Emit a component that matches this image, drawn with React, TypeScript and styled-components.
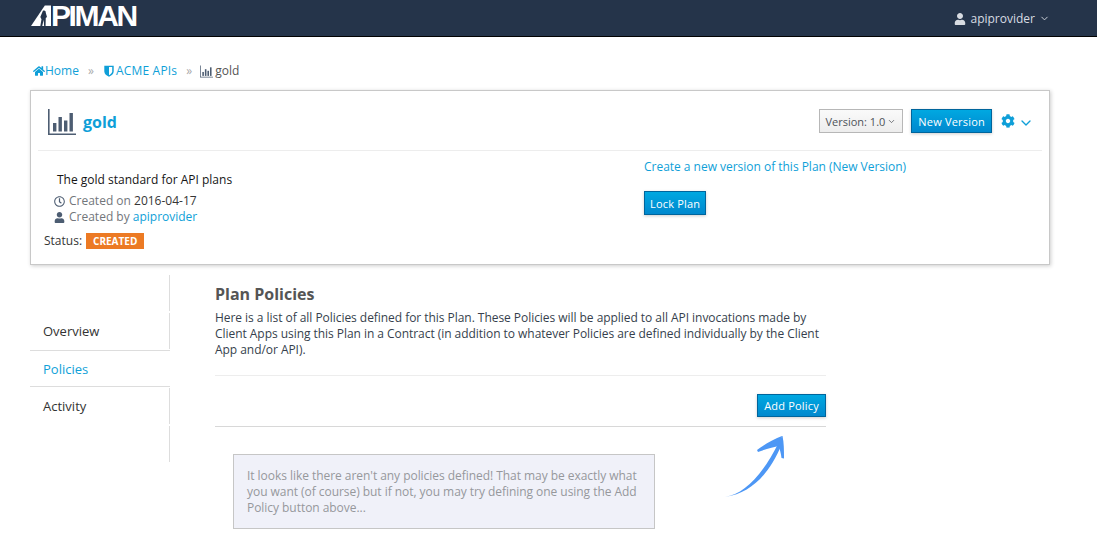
import React from 'react';
import styled, { createGlobalStyle } from 'styled-components';
import { FaHome, FaUser, FaCog, FaRegClock } from 'react-icons/fa';
import { FiChevronDown } from 'react-icons/fi';

const GlobalStyle = createGlobalStyle`
  html, body {
    margin: 0;
    padding: 0;
    background: #fff;
    font-family: "Open Sans", "Liberation Sans", sans-serif;
    font-size: 12px;
    line-height: 16px;
    color: #363636;
  }
  * { box-sizing: border-box; }
`;

function ChartIcon({ size }: { size: number }) {
  return (
    <svg width={size} height={size} viewBox="0 0 28 28" fill="#4d5d72">
      <path d="M0 1h1.600v24.400H28V27H0z" />
      <rect x="5" y="15" width="3.400" height="8.500" />
      <rect x="10.500" y="9" width="3.400" height="14.500" />
      <rect x="16" y="12.500" width="3.400" height="11" />
      <rect x="21.500" y="5" width="3.400" height="18.500" />
    </svg>
  );
}

function ShieldIcon() {
  return (
    <svg width="12" height="12" viewBox="-2 0 12 12">
      <path d="M0.300 0.800h9.400v5.600c0 2.500-2.400 4.200-4.700 5.300-2.300-1.100-4.700-2.800-4.700-5.300z" fill="#0f9fd8" />
      <path d="M5 2v8.200c1.500-.8 3.200-2.100 3.200-3.900V2z" fill="#fff" />
    </svg>
  );
}

function LogoMark() {
  return (
    <svg width="20" height="22" viewBox="0 0 21 22">
      <path d="M0 21.500 14.500 0H21v21.500z" fill="#fff" />
      <path d="M12.500 5.500c1.800-.9 3.300.3 3 2l1.300 4.500-1.300 1-.2 8.500h-1.500l-.5-6.500-1.500 6.500h-2l1.200-7-1.200-2.500z" fill="#25344a" />
    </svg>
  );
}

function PolicyArrow() {
  return (
    <ArrowSvg width="62" height="62" viewBox="0 0 62 62" fill="#4d97f5">
      <path d="M1 61C20 58 38 40 55 6L58 8C45 38 28 57 1 61Z" />
      <path d="M58 0C50 3 41 8 33 14L34 16C42 13 50 11 55 10Z" />
      <path d="M58 0L54 8C56 13 57 18 57.500 22L60 22.500C60 14 60 7 58.500 0Z" />
    </ArrowSvg>
  );
}

export default function App() {
  return (
    <>
      <GlobalStyle />
      <TopBar>
        <Logo>
          <LogoMark />
          <LogoText>PIMAN</LogoText>
        </Logo>
        <UserMenu>
          <FaUser size={12} />
          <span>apiprovider</span>
          <FiChevronDown size={11} />
        </UserMenu>
      </TopBar>

      <Page>
        <Breadcrumbs>
          <Crumb><FaHome size={12} />Home</Crumb>
          <Separator>»</Separator>
          <Crumb $gap={2} $tracking={0.2}><ShieldIcon />ACME APIs</Crumb>
          <Separator>»</Separator>
          <CurrentCrumb><ChartIcon size={13} />gold</CurrentCrumb>
        </Breadcrumbs>

        <Card>
          <CardHeader>
            <TitleBlock>
              <ChartIcon size={28} />
              <Title>gold</Title>
            </TitleBlock>
            <HeaderActions>
              <VersionButton>
                Version: 1.0
                <FiChevronDown size={9} />
              </VersionButton>
              <PrimaryButton>New Version</PrimaryButton>
              <GearMenu>
                <FaCog size={14} />
                <FiChevronDown size={16} />
              </GearMenu>
            </HeaderActions>
          </CardHeader>
          <CardBody>
            <Details>
              <Description>The gold standard for API plans</Description>
              <Meta>
                <MetaIcon><FaRegClock size={11} /></MetaIcon>
                <span><Muted>Created on</Muted> 2016-04-17</span>
              </Meta>
              <Meta>
                <MetaIcon><FaUser size={11} /></MetaIcon>
                <span><Muted>Created by</Muted> <Link>apiprovider</Link></span>
              </Meta>
              <StatusRow>
                Status:
                <StatusBadge>CREATED</StatusBadge>
              </StatusRow>
            </Details>
            <Versioning>
              <Link>Create a new version of this Plan (New Version)</Link>
              <LockButton>Lock Plan</LockButton>
            </Versioning>
          </CardBody>
        </Card>

        <Columns>
          <SideNav>
            <NavRow><NavLabel /></NavRow>
            <NavRow $underlined><NavLabel>Overview</NavLabel></NavRow>
            <NavRow $underlined $active><NavLabel $active>Policies</NavLabel></NavRow>
            <NavRow $offset><NavLabel>Activity</NavLabel></NavRow>
            <NavRow><NavLabel /></NavRow>
          </SideNav>

          <Content>
            <Heading>Plan Policies</Heading>
            <Intro>
              Here is a list of all Policies defined for this Plan. These Policies will be applied to all API invocations made by
              Client Apps using this Plan in a Contract (in addition to whatever Policies are defined individually by the Client
              App and/or API).
            </Intro>
            <Toolbar>
              <AddPolicyButton>Add Policy</AddPolicyButton>
            </Toolbar>
            <EmptyRow>
              <EmptyNote>
                It looks like there aren't any policies defined! That may be exactly what you want (of course) but if not, you
                may try defining one using the Add Policy button above...
              </EmptyNote>
              <PolicyArrow />
            </EmptyRow>
          </Content>
        </Columns>
      </Page>
    </>
  );
}

const TopBar = styled.header`
  height: 37px;
  background: #25344a;
  border-bottom: 1px solid #030303;
  display: flex;
  justify-content: space-between;
  align-items: flex-start;
  padding: 5px 47px 0 31px;
`;

const Logo = styled.div`
  display: flex;
  align-items: flex-start;
`;

const LogoText = styled.span`
  font-family: "Liberation Sans", sans-serif;
  font-weight: 700;
  font-size: 30px;
  line-height: 22px;
  letter-spacing: -2.4px;
  color: #fff;
`;

const UserMenu = styled.div`
  display: flex;
  align-items: center;
  gap: 4px;
  height: 27px;
  color: #d8dce2;
  font-size: 12px;
`;

const Page = styled.main`
  padding: 26px 47px 0 30px;
`;

const Breadcrumbs = styled.nav`
  display: flex;
  align-items: center;
  height: 16px;
  padding-left: 3px;
  margin-bottom: 11px;
`;

const Crumb = styled.a<{ $gap?: number; $tracking?: number }>`
  display: flex;
  align-items: center;
  gap: ${p => p.$gap ?? 0}px;
  letter-spacing: ${p => p.$tracking ?? 0}px;
  color: #0f9fd8;
`;

const CurrentCrumb = styled.span`
  display: flex;
  align-items: center;
  gap: 2px;
  color: #555;
`;

const Separator = styled.span`
  color: #aaa;
  margin: 0 8px 0 9px;
`;

const Card = styled.section`
  height: 175px;
  border: 1px solid #c8c8c8;
  background: #fff;
  box-shadow: 1px 1px 4px rgba(0, 0, 0, 0.2);
  padding: 0 7px;
`;

const CardHeader = styled.div`
  height: 60px;
  border-bottom: 1px solid #ededed;
  display: flex;
  justify-content: space-between;
  align-items: flex-start;
  padding: 17px 8px 0 10px;
`;

const TitleBlock = styled.div`
  display: flex;
  align-items: center;
  gap: 7px;
  height: 28px;
`;

const Title = styled.h1`
  margin: 0;
  font-size: 16px;
  font-weight: 700;
  color: #0f9fd8;
`;

const HeaderActions = styled.div`
  display: flex;
  align-items: center;
  gap: 8px;
  padding-top: 1px;
`;

const VersionButton = styled.button`
  height: 24px;
  padding: 0 6px;
  display: flex;
  align-items: center;
  gap: 2px;
  border: 1px solid #b7b7b7;
  background: linear-gradient(#fafafa, #ededed);
  color: #4d5258;
  font: 500 11px "Open Sans", sans-serif;
`;

const PrimaryButton = styled.button`
  height: 24px;
  padding: 0 6px;
  border: 1px solid #00659c;
  background: linear-gradient(#00a8e1, #0088ce);
  color: #fff;
  font: 500 11px "Open Sans", sans-serif;
  letter-spacing: 0.2px;
  box-shadow: 0 1px 3px rgba(0, 0, 0, 0.2);
`;

const LockButton = styled(PrimaryButton)`
  padding: 0 5px;
`;

const AddPolicyButton = styled(PrimaryButton)`
  height: 23px;
`;

const GearMenu = styled.div`
  display: flex;
  align-items: center;
  gap: 3px;
  margin-left: 1px;
  color: #0f9fd8;
  svg:last-child { margin-top: 3px; }
`;

const CardBody = styled.div`
  display: grid;
  grid-template-columns: 606px 1fr;
`;

const Details = styled.div`
  padding: 21px 0 0 6px;
`;

const Description = styled.p`
  margin: 0 0 5px 13px;
  color: #151515;
`;

const Meta = styled.div`
  display: flex;
  align-items: center;
  gap: 4px;
  height: 16px;
  padding-left: 9px;
`;

const MetaIcon = styled.span`
  display: inline-flex;
  justify-content: center;
  width: 12px;
  color: #4d5d72;
`;

const Muted = styled.span`
  color: #72767b;
`;

const Link = styled.a`
  color: #0f9fd8;
  letter-spacing: -0.02px;
`;

const StatusRow = styled.div`
  display: flex;
  align-items: center;
  gap: 4px;
  margin-top: 8px;
`;

const StatusBadge = styled.span`
  background: #ec7a24;
  color: #fff;
  font-size: 10px;
  font-weight: 700;
  line-height: 16px;
  padding: 0 7px;
`;

const Versioning = styled.div`
  display: flex;
  flex-direction: column;
  align-items: flex-start;
  gap: 16px;
  padding-top: 8px;
`;

const Columns = styled.div`
  display: flex;
  margin-top: 10px;
`;

const SideNav = styled.nav`
  width: 140px;
  flex: none;
  margin-right: 45px;
`;

const NavRow = styled.div<{ $underlined?: boolean; $active?: boolean; $offset?: boolean }>`
  height: ${p => (p.$active ? 36 : p.$offset ? 39 : 38)}px;
  padding-top: ${p => (p.$offset ? 1 : 0)}px;
  border-bottom: ${p => (p.$underlined ? '1px solid #ddd' : 'none')};
`;

const NavLabel = styled.div<{ $active?: boolean }>`
  height: ${p => (p.$active ? 35 : 36)}px;
  padding: 10px 13px 0;
  color: ${p => (p.$active ? '#0f9fd8' : '#333')};
  font-size: 13px;
  border-right: ${p => (p.$active ? 'none' : '1px solid #ddd')};
`;

const Content = styled.div`
  width: 611px;
`;

const Heading = styled.h2`
  margin: 0 0 6px;
  font-size: 16px;
  line-height: 20px;
  font-weight: 700;
  color: #555;
  padding-top: 9px;
`;

const Intro = styled.p`
  margin: 0;
  padding-bottom: 17px;
  border-bottom: 1px solid #ededed;
  color: #363f4d;
  letter-spacing: -0.045px;
`;

const Toolbar = styled.div`
  display: flex;
  justify-content: flex-end;
  padding: 18px 0 9px;
  border-bottom: 1px solid #d8d8d8;
`;

const EmptyRow = styled.div`
  position: relative;
  padding: 27px 0 0 18px;
`;

const EmptyNote = styled.div`
  width: 422px;
  height: 75px;
  padding: 13px;
  background: #f0f1f9;
  border: 1px solid #c6c6c6;
  color: #96989c;
  letter-spacing: -0.045px;
`;

const ArrowSvg = styled.svg`
  position: absolute;
  left: 509px;
  top: 9px;
`;
